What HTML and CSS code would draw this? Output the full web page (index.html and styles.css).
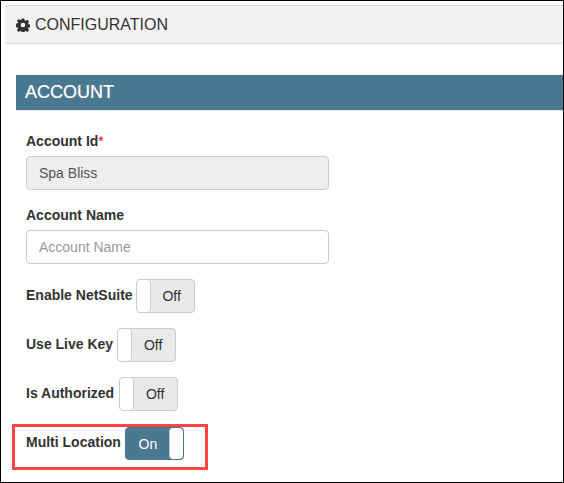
FILE: index.html
```html
<!DOCTYPE html>
<html lang="en">
<head>
    <meta charset="UTF-8">
    <title>Configuration</title>
    <link rel="stylesheet" href="styles.css">
</head>
<body>
    <div class="frame">
        <div class="page-title">
            <svg class="gear" viewBox="0 0 24 24"><path fill-rule="evenodd" d="M9.800 1h4.400l.6 3.100 1.900.8 2.600-1.800 3.100 3.100-1.800 2.600.8 1.900 3 .6v4.400l-3 .6-.8 1.900 1.800 2.600-3.100 3.100-2.600-1.800-1.900.8-.6 3H9.800l-.6-3-1.900-.8-2.600 1.800-3.100-3.100 1.800-2.600-.8-1.900-3-.6V9.800l3-.6.8-1.900-1.800-2.600 3.100-3.100 2.600 1.800 1.900-.8zM12 8a4 4 0 1 0 0 8 4 4 0 0 0 0-8z"/></svg>
            <span>CONFIGURATION</span>
        </div>
        <div class="content">
            <h2 class="section-head">ACCOUNT</h2>
            <div class="fields">
                <div class="form-group">
                    <label for="accountId">Account Id<span class="required">*</span></label>
                    <input type="text" id="accountId" value="Spa Bliss" disabled>
                </div>
                <div class="form-group">
                    <label for="accountName">Account Name</label>
                    <input type="text" id="accountName" placeholder="Account Name">
                </div>
                <div class="switch-row">
                    <span class="switch-label">Enable NetSuite</span>
                    <div class="switch"><span class="knob"></span><span class="state">Off</span></div>
                </div>
                <div class="switch-row gap-4">
                    <span class="switch-label">Use Live Key</span>
                    <div class="switch"><span class="knob"></span><span class="state">Off</span></div>
                </div>
                <div class="switch-row gap-5">
                    <span class="switch-label">Is Authorized</span>
                    <div class="switch"><span class="knob"></span><span class="state">Off</span></div>
                </div>
                <div class="switch-row gap-4">
                    <span class="switch-label">Multi Location</span>
                    <div class="switch on"><span class="state">On</span><span class="knob"></span></div>
                </div>
            </div>
        </div>
        <div class="highlight"></div>
    </div>
</body>
</html>
```

FILE: styles.css
```css
html, body {
    margin: 0;
    padding: 0;
}

body {
    font-family: "Liberation Sans", Arial, sans-serif;
    color: #333;
    background-color: #fff;
}

.frame {
    position: relative;
    width: 564px;
    height: 483px;
    box-sizing: border-box;
    border: 1px solid #000;
    padding-top: 4px;
    padding-left: 4px;
    overflow: hidden;
}

.page-title {
    display: flex;
    align-items: center;
    gap: 5px;
    height: 37px;
    padding-left: 11px;
    background-color: #f3f3f3;
    border-top: 1px solid #ddd;
    border-bottom: 1px solid #ddd;
    font-size: 16px;
}

.gear {
    width: 14px;
    height: 14px;
    fill: #333;
}

.content {
    padding: 31px 0 0 11px;
}

.section-head {
    margin: 0;
    height: 35px;
    line-height: 34px;
    padding-left: 9px;
    background-color: #4b7891;
    border-bottom: 1px solid #e4e4e4;
    color: #fff;
    font-size: 18px;
    font-weight: normal;
    -webkit-text-stroke: 0.2px #fff;
}

.fields {
    padding: 20px 0 0 10px;
}

.form-group {
    margin-bottom: 15px;
}

label,
.switch-label {
    font-size: 14px;
    font-weight: bold;
    line-height: 20px;
}

label {
    display: block;
    margin-bottom: 5px;
}

.required {
    color: #e00;
    font-weight: normal;
}

input {
    display: block;
    width: 303px;
    height: 34px;
    box-sizing: border-box;
    padding: 6px 12px;
    border: 1px solid #ccc;
    border-radius: 4px;
    font-family: inherit;
    font-size: 14px;
    color: #555;
    background-color: #fff;
}

input::placeholder {
    color: #999;
}

input:disabled {
    background-color: #eee;
}

.switch-row {
    display: flex;
    align-items: center;
    gap: 3px;
    height: 34px;
    margin-bottom: 15px;
}

.switch-row.gap-4 {
    gap: 4px;
}

.switch-row.gap-5 {
    gap: 5px;
}

.switch-label {
    margin-top: -2px;
}

.switch {
    display: flex;
    width: 59px;
    height: 34px;
    box-sizing: border-box;
    border: 1px solid #ccc;
    border-radius: 4px;
    overflow: hidden;
    background-color: #e9e9e9;
    font-size: 14px;
}

.knob {
    width: 13px;
    background-color: #fff;
    border-right: 1px solid #ccc;
    border-radius: 4px;
}

.state {
    flex: 1;
    padding-right: 1px;
    text-align: center;
    line-height: 32px;
}

.switch.on {
    height: 33px;
    margin-top: 1px;
    background-color: #4b7891;
    border-color: #4b7891;
    color: #fff;
}

.switch.on .state {
    padding-right: 0;
    padding-left: 1px;
}

.switch.on .knob {
    border-right: none;
    border-left: 1px solid #ccc;
}

.highlight {
    position: absolute;
    left: 11px;
    top: 423px;
    width: 190px;
    height: 40px;
    border: 3px solid #f44;
}
```
